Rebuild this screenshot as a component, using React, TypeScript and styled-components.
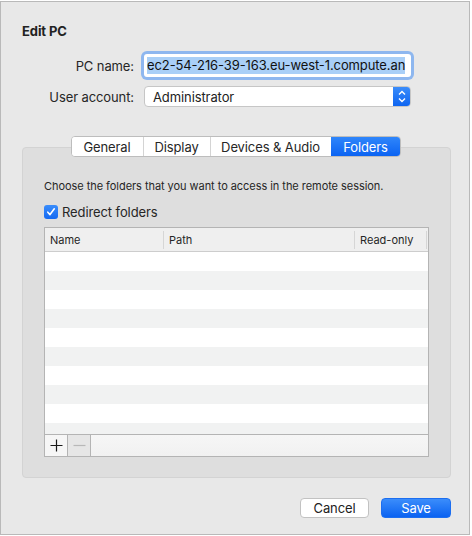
import React from "react";
import styled, { createGlobalStyle } from "styled-components";

const Global = createGlobalStyle`
  html, body { margin: 0; padding: 0; background: #ffffff; }
  body { font-family: "Inter", "Roboto", "Liberation Sans", sans-serif; color: #1d1d1d; }
  * { box-sizing: border-box; }
`;

const Window = styled.div`
  margin-top: 1px;
  width: 470px;
  height: 534px;
  background: #e8e8e8;
  border: 1px solid #b9b9b9;
  display: flex;
  flex-direction: column;
  padding: 0 0 0 21px;
`;

const Title = styled.div`
  font-size: 13px;
  font-weight: 700;
  line-height: 16px;
  margin-top: 21px;
  color: #222;
  letter-spacing: -0.1px;
`;

const Form = styled.div`
  display: grid;
  grid-template-columns: 112px 267px;
  column-gap: 10px;
  row-gap: 9px;
  align-items: center;
  margin-top: 15px;
`;

const Label = styled.div`
  font-size: 13px;
  text-align: right;
  color: #262626;
  letter-spacing: -0.1px;
`;

const TextField = styled.div`
  height: 23px;
  background: #ffffff;
  border-radius: 3px;
  box-shadow: 0 0 0 3px #8eb7ef, 0 0 0 1px #6a9fe6;
  display: flex;
  align-items: center;
  padding: 0 3px;
  overflow: hidden;
  white-space: nowrap;
`;

const Selected = styled.span`
  background: #a9cff7;
  font-size: 13px;
  line-height: 17px;
  color: #111;
  letter-spacing: -0.1px;
`;

const Popup = styled.div`
  height: 21px;
  background: #ffffff;
  border-radius: 4px;
  border: 1px solid #c6c6c6;
  display: flex;
  align-items: center;
  font-size: 13px;
  letter-spacing: -0.1px;
  overflow: hidden;
`;

const PopupText = styled.div`
  flex: 1;
  padding-left: 8px;
  color: #222;
`;

const Stepper = styled.div`
  width: 18px;
  height: 21px;
  margin: -1px -1px -1px 0;
  background: linear-gradient(#3c8efb, #0c63f0);
  border-radius: 0 4px 4px 0;
  display: flex;
  align-items: center;
  justify-content: center;
`;

const TabsArea = styled.div`
  margin-top: 29px;
  display: flex;
  flex-direction: column;
  width: 429px;
`;

const Tabs = styled.div`
  align-self: center;
  margin-left: -2px;
  display: flex;
  height: 21px;
  background: #fff;
  border: 1px solid #bdbdbd;
  border-radius: 4px;
  position: relative;
  z-index: 1;
  overflow: hidden;
`;

const Tab = styled.div<{ $active?: boolean; $w: number }>`
  width: ${(p) => p.$w}px;
  display: flex;
  align-items: center;
  justify-content: center;
  font-size: 13px;
  letter-spacing: -0.1px;
  color: ${(p) => (p.$active ? "#fff" : "#262626")};
  background: ${(p) => (p.$active ? "linear-gradient(#2f86fb, #0b63f2)" : "#fff")};
  border-left: 1px solid ${(p) => (p.$active ? "transparent" : "#d4d4d4")};
  &:first-child { border-left: none; }
`;

const Panel = styled.div`
  margin-top: -10px;
  height: 331px;
  background: #dedede;
  border: 1px solid #d3d3d3;
  border-radius: 4px;
  padding: 31px 21px 0 21px;
  display: flex;
  flex-direction: column;
`;

const Hint = styled.div`
  font-size: 11px;
  color: #262626;
  line-height: 14px;
  letter-spacing: -0.05px;
`;

const CheckRow = styled.div`
  display: flex;
  align-items: center;
  gap: 4px;
  margin-top: 11px;
  font-size: 13px;
  letter-spacing: -0.1px;
  color: #262626;
`;

const CheckBox = styled.div`
  width: 14px;
  height: 14px;
  border-radius: 3px;
  background: linear-gradient(#3a8dfb, #1469f2);
  display: flex;
  align-items: center;
  justify-content: center;
`;

const Table = styled.div`
  margin-top: 7px;
  width: 385px;
  border: 1px solid #b4b4b4;
  background: #fff;
  display: flex;
  flex-direction: column;
`;

const HeaderRow = styled.div`
  display: grid;
  grid-template-columns: 118px 191px 1fr;
  height: 24px;
  background: #efefef;
  border-bottom: 1px solid #cdcdcd;
  align-items: center;
`;

const HeaderCell = styled.div`
  font-size: 11px;
  color: #262626;
  padding-left: 5px;
  border-left: 1px solid #d6d6d6;
  height: 18px;
  display: flex;
  align-items: center;
  &:first-child { border-left: none; }
  &:last-child { border-right: 1px solid #d6d6d6; margin-right: 1px; }
`;

const Rows = styled.div`
  height: 182px;
  overflow: hidden;
  display: flex;
  flex-direction: column;
`;

const Row = styled.div<{ $odd: boolean }>`
  height: 19px;
  flex-shrink: 0;
  background: ${(p) => (p.$odd ? "#f1f2f2" : "#ffffff")};
`;

const BottomBar = styled.div`
  height: 22px;
  border-top: 1px solid #b4b4b4;
  display: flex;
  background: linear-gradient(#f6f6f6, #f1f1f1);
`;

const BarButton = styled.div<{ $disabled?: boolean }>`
  width: 23px;
  border-right: 1px solid #b4b4b4;
  background: ${(p) => (p.$disabled ? "#e6e6e6" : "#f6f6f6")};
  display: flex;
  align-items: center;
  justify-content: center;
`;

const Footer = styled.div`
  display: flex;
  justify-content: flex-end;
  gap: 12px;
  margin-top: 20px;
  padding-right: 18px;
`;

const Button = styled.div<{ $primary?: boolean }>`
  width: ${(p) => (p.$primary ? 70 : 69)}px;
  height: 20px;
  border-radius: 4px;
  display: flex;
  align-items: center;
  justify-content: center;
  font-size: 13px;
  letter-spacing: -0.1px;
  color: ${(p) => (p.$primary ? "#fff" : "#222")};
  background: ${(p) => (p.$primary ? "linear-gradient(#3b8dfb, #0a62f1)" : "#fff")};
  border: 1px solid ${(p) => (p.$primary ? "#1c6ef0" : "#c2c2c2")};
`;

export default function App() {
  const rows = Array.from({ length: 10 }, (_, i) => i);
  return (
    <>
      <Global />
      <Window>
        <Title>Edit PC</Title>
        <Form>
          <Label>PC name:</Label>
          <TextField>
            <Selected>ec2-54-216-39-163.eu-west-1.compute.an</Selected>
          </TextField>
          <Label>User account:</Label>
          <Popup>
            <PopupText>Administrator</PopupText>
            <Stepper>
              <svg width="10" height="15" viewBox="0 0 10 15">
                <path d="M2 5.5 L5 2.5 L8 5.5" fill="none" stroke="#fff" strokeWidth="1.4" />
                <path d="M2 9.5 L5 12.5 L8 9.5" fill="none" stroke="#fff" strokeWidth="1.4" />
              </svg>
            </Stepper>
          </Popup>
        </Form>
        <TabsArea>
          <Tabs>
            <Tab $w={71}>General</Tab>
            <Tab $w={67}>Display</Tab>
            <Tab $w={121}>Devices &amp; Audio</Tab>
            <Tab $w={69} $active>Folders</Tab>
          </Tabs>
          <Panel>
            <Hint>Choose the folders that you want to access in the remote session.</Hint>
            <CheckRow>
              <CheckBox>
                <svg width="10" height="10" viewBox="0 0 10 10">
                  <path d="M1.8 5.2 L4 7.6 L8.3 1.8" fill="none" stroke="#fff" strokeWidth="1.6" strokeLinecap="round" strokeLinejoin="round" />
                </svg>
              </CheckBox>
              Redirect folders
            </CheckRow>
            <Table>
              <HeaderRow>
                <HeaderCell>Name</HeaderCell>
                <HeaderCell>Path</HeaderCell>
                <HeaderCell>Read-only</HeaderCell>
              </HeaderRow>
              <Rows>
                {rows.map((i) => (
                  <Row key={i} $odd={i % 2 === 1} />
                ))}
              </Rows>
              <BottomBar>
                <BarButton>
                  <svg width="13" height="13" viewBox="0 0 13 13">
                    <path d="M6.5 0.5 V12.5 M0.5 6.5 H12.5" stroke="#1a1a1a" strokeWidth="1.2" />
                  </svg>
                </BarButton>
                <BarButton $disabled>
                  <svg width="13" height="13" viewBox="0 0 13 13">
                    <path d="M0.5 6.5 H12.5" stroke="#b8b8b8" strokeWidth="1.2" />
                  </svg>
                </BarButton>
              </BottomBar>
            </Table>
          </Panel>
        </TabsArea>
        <Footer>
          <Button>Cancel</Button>
          <Button $primary>Save</Button>
        </Footer>
      </Window>
    </>
  );
}
